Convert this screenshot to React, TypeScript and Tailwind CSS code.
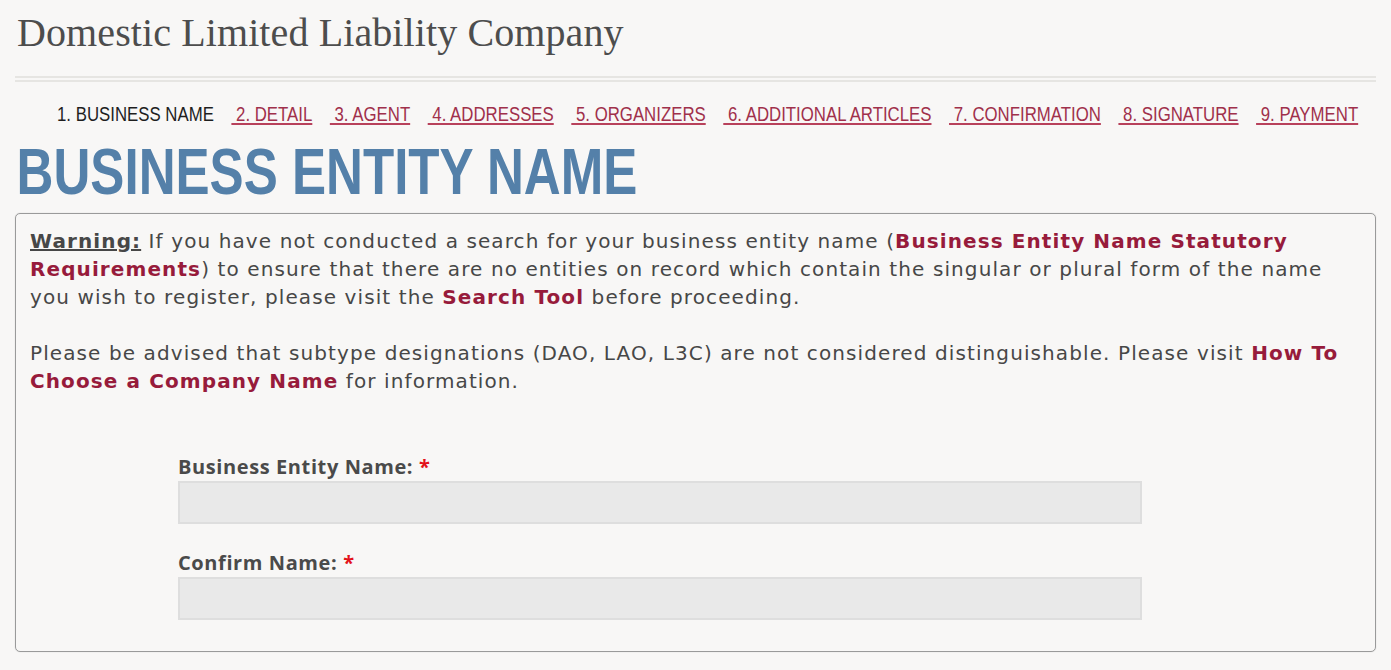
import React from 'react';

const steps = [
  '2. DETAIL',
  '3. AGENT',
  '4. ADDRESSES',
  '5. ORGANIZERS',
  '6. ADDITIONAL ARTICLES',
  '7. CONFIRMATION',
  '8. SIGNATURE',
  '9. PAYMENT',
];

const Field: React.FC<{ label: string; id: string }> = ({ label, id }) => (
  <div className="flex flex-col">
    <label
      htmlFor={id}
      className="font-['Open_Sans','Liberation_Sans',sans-serif] text-[20px] font-bold leading-[22px] tracking-[0.6px] text-[#4a4a4a] mb-[3px]"
    >
      {label} <span className="text-[#e3121b]">*</span>
    </label>
    <input
      id={id}
      type="text"
      className="w-[964px] h-[43px] bg-[#e9e9e9] border-2 border-[#dedede] outline-none px-2"
    />
  </div>
);

export default function App() {
  return (
    <div className="min-h-screen bg-[#f8f7f6] px-[15px] pt-[9px] text-[#444] overflow-hidden">
      <h1 className="pl-[2px] font-['Liberation_Serif',serif] text-[40px] leading-[48px] tracking-[0.1px] text-[#4d4d4d]">
        Domestic Limited Liability Company
      </h1>

      <div className="mt-[19px] flex flex-col gap-[2px]">
        <div className="h-[2px] bg-[#e6e5e2]" />
        <div className="h-[2px] bg-[#e6e5e2]" />
      </div>

      {/* step bar: Arial Narrow look, squeezed horizontally */}
      <div className="mt-[20px] ml-[42px] overflow-hidden">
        <nav className="w-[1549px] origin-left scale-x-[0.84] flex justify-between whitespace-nowrap font-['Liberation_Sans',sans-serif] text-[20px] leading-[24px]">
          <span className="text-[#1e1e1e]">1. BUSINESS NAME</span>
          {steps.map((s) => (
            <a
              key={s}
              href="#"
              className="text-[#a0304b] underline decoration-[#b8415b] underline-offset-[2px] whitespace-pre"
            >
              {' ' + s}
            </a>
          ))}
        </nav>
      </div>

      <h2 className="mt-[13px] pl-[2px] origin-left scale-x-[0.786] whitespace-nowrap font-['Liberation_Sans',sans-serif] font-bold text-[65px] leading-[66px] text-[#5480a9]">
        BUSINESS ENTITY NAME
      </h2>

      <div className="mt-[8px] h-[439px] rounded-[5px] border border-[#9a9a9a] shadow-[0_0_1px_rgba(0,0,0,0.25)] px-[14px] pt-[13px] font-['DejaVu_Sans',sans-serif] text-[20px] leading-[28px] tracking-[1.1px] text-[#474747]">
        <p>
          <span className="font-bold underline">Warning:</span> If you have not conducted a search for your business entity name (
          <a href="#" className="font-bold text-[#971b3b]">
            Business Entity Name Statutory Requirements
          </a>
          ) to ensure that there are no entities on record which contain the singular or plural form of the name you wish to register, please visit the{' '}
          <a href="#" className="font-bold text-[#971b3b]">
            Search Tool
          </a>{' '}
          before proceeding.
        </p>
        <p className="mt-[28px]">
          Please be advised that subtype designations (DAO, LAO, L3C) are not considered distinguishable. Please visit{' '}
          <a href="#" className="font-bold text-[#971b3b]">
            How To Choose a Company Name
          </a>{' '}
          for information.
        </p>

        <div className="mt-[61px] pl-[148px] flex flex-col gap-[28px] tracking-normal">
          <Field id="name" label="Business Entity Name:" />
          <Field id="confirm" label="Confirm Name:" />
        </div>
      </div>
    </div>
  );
}
